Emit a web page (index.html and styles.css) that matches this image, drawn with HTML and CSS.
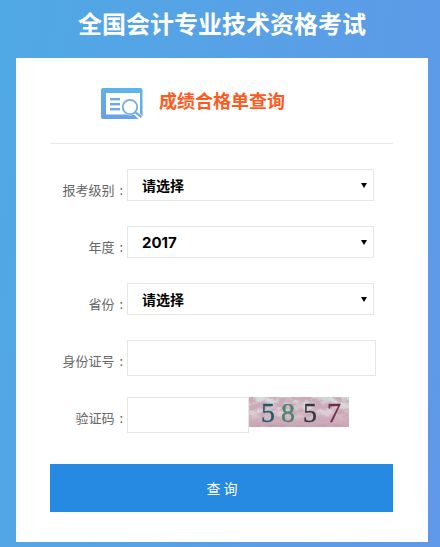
FILE: index.html
```html
<!DOCTYPE html>
<html lang="zh-CN">
<head>
<meta charset="utf-8">
<title>成绩合格单查询</title>
<link rel="stylesheet" href="styles.css">
</head>
<body>
<h1 class="title">全国会计专业技术资格考试</h1>
<main class="card">
  <div class="head">
    <svg class="logo" width="42" height="31" viewBox="0 0 42 31">
      <defs>
        <linearGradient id="frame" x1="0.6" y1="0" x2="0.2" y2="1">
          <stop offset="0" stop-color="#5db6ea"/>
          <stop offset="1" stop-color="#6a9fe7"/>
        </linearGradient>
      </defs>
      <rect width="41.5" height="31" rx="2" fill="url(#frame)"/>
      <rect x="5" y="5" width="34" height="21.5" fill="#fff"/>
      <rect x="9" y="10" width="10" height="2.4" fill="#6fa9e6"/>
      <rect x="9" y="15" width="10" height="2.4" fill="#6fa9e6"/>
      <rect x="9" y="20" width="10" height="2.4" fill="#6fa9e6"/>
      <path d="M34 24 L41 31" stroke="#fff" stroke-width="5" fill="none"/>
      <circle cx="29" cy="19" r="8.4" fill="#fff"/>
      <circle cx="29" cy="19" r="7.2" fill="#fff" stroke="#72ade8" stroke-width="1.8"/>
      <path d="M34 24.2 L40.5 29" stroke="#72ade8" stroke-width="2.2" fill="none"/>
    </svg>
    <h2 class="subtitle">成绩合格单查询</h2>
  </div>
  <form class="form">
    <div class="row row-select">
      <label class="label">报考级别 :</label>
      <select class="field select"><option>请选择</option></select>
    </div>
    <div class="row row-select">
      <label class="label">年度 :</label>
      <select class="field select select-num"><option>2017</option></select>
    </div>
    <div class="row row-select">
      <label class="label">省份 :</label>
      <select class="field select"><option>请选择</option></select>
    </div>
    <div class="row row-input">
      <label class="label">身份证号 :</label>
      <input class="field input" type="text">
    </div>
    <div class="row row-code">
      <label class="label">验证码 :</label>
      <input class="field code" type="text">
      <svg class="captcha" width="100" height="30" viewBox="0 0 100 30">
        <defs>
          <filter id="noise" x="0" y="0" width="100%" height="100%">
            <feTurbulence type="fractalNoise" baseFrequency="0.11 0.16" numOctaves="4" seed="11"/>
            <feColorMatrix values="0 0 0 0 0.6  0 0 0 0 0.4  0 0 0 0 0.48  3.4 0 0 0 -1.15"/>
          </filter>
          <filter id="soft"><feGaussianBlur stdDeviation="0.4"/></filter>
          <linearGradient id="wash" x1="0" y1="0" x2="0" y2="1">
            <stop offset="0" stop-color="#d5dfde"/>
            <stop offset="0.6" stop-color="#dccbd2"/>
            <stop offset="1" stop-color="#c39aa9"/>
          </linearGradient>
        </defs>
        <rect width="100" height="30" fill="url(#wash)"/>
        <rect width="100" height="30" filter="url(#noise)"/>
        <g class="digits" filter="url(#soft)">
          <text x="12" y="25" fill="#1f5a6b" stroke="#1f5a6b">5</text>
          <text x="32" y="25" fill="#4f8270" stroke="#4f8270">8</text>
          <text x="54" y="25" fill="#33373d" stroke="#33373d">5</text>
          <text x="78" y="25" fill="#70304f" stroke="#70304f">7</text>
        </g>
      </svg>
    </div>
    <button class="submit" type="button">查 询</button>
  </form>
</main>
</body>
</html>
```
FILE: styles.css
```css
* { box-sizing: border-box; }
html, body { height: 547px; overflow: hidden; }
body {
  margin: 0;
  padding-top: 1px;
  background: linear-gradient(100deg, #50a9e4 0%, #5f98e8 100%);
  font-family: "Noto Sans CJK SC", "Liberation Sans", sans-serif;
}
.title {
  margin: 0;
  height: 57px;
  padding: 4px 0 0 4px;
  text-align: center;
  color: #fff;
  font-size: 24px;
  font-weight: 700;
  line-height: 36px;
}
.card {
  margin: 0 12px 0 16px;
  height: 484px;
  padding: 0 35px 0 34px;
  background: #fff;
}
.head {
  display: flex;
  align-items: center;
  height: 86px;
  padding: 5px 0 0 51px;
  border-bottom: 1px solid #e8e8e8;
}
.logo { margin-right: 16px; flex: none; }
.subtitle {
  margin: 0 0 6px;
  color: #ff5a1e;
  font-size: 18px;
  font-weight: 700;
  line-height: 26px;
}
.form { display: flex; flex-direction: column; padding-top: 25px; }
.row { display: flex; align-items: flex-start; }
.row-select { height: 57px; }
.row-input { height: 57px; }
.row-code { height: 67px; }
.label {
  width: 77px;
  flex: none;
  padding: 11px 4px 0 0;
  text-align: right;
  color: #666;
  font-size: 13px;
  line-height: 20px;
  word-spacing: 2px;
}
.field {
  border: 1px solid #e6e6e6;
  background: #fff;
  color: #000;
  font-family: inherit;
  border-radius: 0;
  outline: none;
}
.select {
  width: 247px;
  height: 32px;
  padding-left: 14px;
  font-family: Inter, "Noto Sans CJK SC", sans-serif;
  font-size: 14px;
  font-weight: 700;
  appearance: none;
  background: #fff url("data:image/svg+xml,%3Csvg xmlns='http://www.w3.org/2000/svg' width='6' height='5'%3E%3Cpath d='M0 0H6L3 5Z'/%3E%3C/svg%3E") no-repeat right 6px top 13px;
}
.select-num { font-size: 15px; }
.input { width: 249px; height: 36px; }
.code { width: 122px; height: 36px; flex: none; }
.captcha { display: block; flex: none; }
.digits {
  font-family: "Liberation Serif", serif;
  font-size: 28px;
  stroke-width: 0.4;
}
.submit {
  width: 343px;
  height: 48px;
  padding: 0 0 0 1px;
  border: 0;
  background: #2689e2;
  color: #fff;
  font-family: inherit;
  font-size: 14px;
}
```
